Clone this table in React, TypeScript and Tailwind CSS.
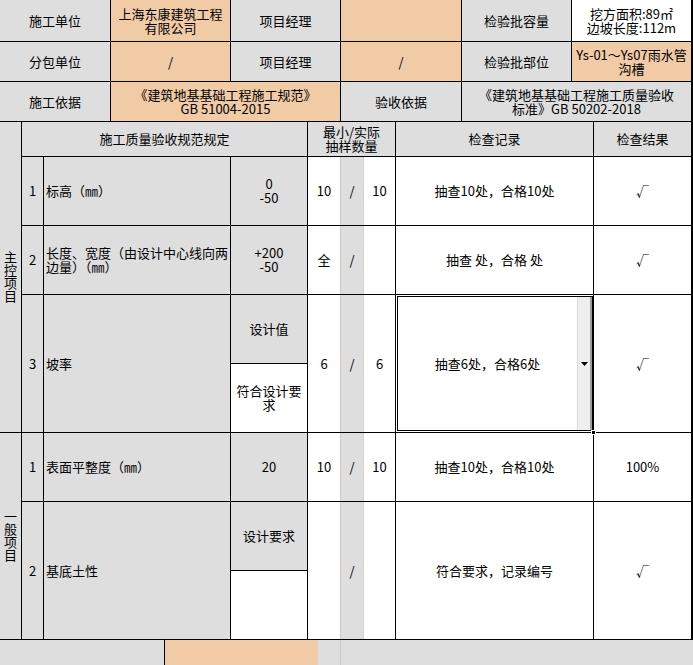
import type { ReactNode } from "react";

const gray = "bg-[#dedede]";
const orange = "bg-[#f1caa6]";

function Cell({ className = "", children }: { className?: string; children?: ReactNode }) {
  return (
    <div
      className={`flex items-center justify-center border-r border-b border-black text-center ${className}`}
    >
      {children}
    </div>
  );
}

function Sample({ a, b }: { a?: string; b?: string }) {
  return (
    <div className="flex h-full w-full">
      <div className="flex w-[32px] items-center justify-center">{a}</div>
      <div className="flex w-[24px] items-center justify-center border-l border-r border-l-[#cdc8c3] border-r-[#d4d0cc] bg-[#dedede]">
        /
      </div>
      <div className="flex flex-1 items-center justify-center">{b}</div>
    </div>
  );
}

function Vertical({ text }: { text: string }) {
  return <div className="leading-[13px] [writing-mode:vertical-rl]">{text}</div>;
}

export default function App() {
  return (
    <div className="h-[665px] w-[693px] overflow-hidden bg-white font-['Noto_Sans_CJK_SC',sans-serif] text-[13px] leading-[14px] text-black">
      {/* header block */}
      <div className="grid grid-cols-[111px_120px_110px_121px_110px_121px] grid-rows-[42px_40px_40px]">
        <Cell className={gray}>施工单位</Cell>
        <Cell className={orange}>
          上海东康建筑工程
          <br />
          有限公司
        </Cell>
        <Cell className={gray}>项目经理</Cell>
        <Cell className={orange} />
        <Cell className={gray}>检验批容量</Cell>
        <Cell className="border-r-2 bg-white">
          挖方面积:89㎡
          <br />
          边坡长度:112m
        </Cell>

        <Cell className={gray}>分包单位</Cell>
        <Cell className={orange}>/</Cell>
        <Cell className={gray}>项目经理</Cell>
        <Cell className={orange}>/</Cell>
        <Cell className={gray}>检验批部位</Cell>
        <Cell className={`border-r-2 whitespace-nowrap ${orange}`}>
          Ys-01～Ys07雨水管
          <br />
          沟槽
        </Cell>

        <Cell className={gray}>施工依据</Cell>
        <Cell className={`col-span-2 ${orange}`}>
          《建筑地基基础工程施工规范》
          <br />
          GB 51004-2015
        </Cell>
        <Cell className={gray}>验收依据</Cell>
        <Cell className={`col-span-2 border-r-2 ${gray}`}>
          《建筑地基基础工程施工质量验收
          <br />
          标准》GB 50202-2018
        </Cell>
      </div>

      {/* inspection items */}
      <div className="grid grid-cols-[22px_22px_187px_77px_88px_198px_99px] grid-rows-[35px_69px_69px_69px_69px_69px_69px_69px]">
        <Cell className={`col-start-1 row-start-1 row-end-6 ${gray}`}>
          <Vertical text="主控项目" />
        </Cell>
        <Cell className={`col-start-2 col-end-5 row-start-1 ${gray}`}>施工质量验收规范规定</Cell>
        <Cell className={`col-start-5 row-start-1 ${gray}`}>
          最小/实际
          <br />
          抽样数量
        </Cell>
        <Cell className={`col-start-6 row-start-1 ${gray}`}>检查记录</Cell>
        <Cell className={`col-start-7 row-start-1 border-r-2 ${gray}`}>检查结果</Cell>

        {/* 1 标高 */}
        <Cell className={`col-start-2 row-start-2 ${gray}`}>1</Cell>
        <Cell className={`col-start-3 row-start-2 justify-start pl-[2px] text-left ${gray}`}>标高（㎜）</Cell>
        <Cell className={`col-start-4 row-start-2 ${gray}`}>
          0
          <br />
          -50
        </Cell>
        <Cell className="col-start-5 row-start-2 bg-white">
          <Sample a="10" b="10" />
        </Cell>
        <Cell className="col-start-6 row-start-2 bg-white">抽查10处，合格10处</Cell>
        <Cell className="col-start-7 row-start-2 border-r-2 bg-white">√</Cell>

        {/* 2 长度宽度 */}
        <Cell className={`col-start-2 row-start-3 ${gray}`}>2</Cell>
        <Cell className={`col-start-3 row-start-3 justify-start pl-[2px] text-left ${gray}`}>
          <div>
            长度、宽度（由设计中心线向两
            <br />
            边量）（㎜）
          </div>
        </Cell>
        <Cell className={`col-start-4 row-start-3 ${gray}`}>
          +200
          <br />
          -50
        </Cell>
        <Cell className="col-start-5 row-start-3 bg-white">
          <Sample a="全" />
        </Cell>
        <Cell className="col-start-6 row-start-3 bg-white">抽查 处，合格 处</Cell>
        <Cell className="col-start-7 row-start-3 border-r-2 bg-white">√</Cell>

        {/* 3 坡率 */}
        <Cell className={`col-start-2 row-start-4 row-end-6 ${gray}`}>3</Cell>
        <Cell className={`col-start-3 row-start-4 row-end-6 justify-start pl-[2px] ${gray}`}>坡率</Cell>
        <Cell className={`col-start-4 row-start-4 ${gray}`}>设计值</Cell>
        <Cell className="col-start-4 row-start-5 bg-white">
          符合设计要
          <br />
          求
        </Cell>
        <Cell className="col-start-5 row-start-4 row-end-6 bg-white">
          <Sample a="6" b="6" />
        </Cell>
        <div className="relative z-10 col-start-6 row-start-4 row-end-6 border-r border-b border-black bg-white">
          <div className="absolute top-[1px] right-0 bottom-[1px] left-[1px] flex border border-black">
            <div className="flex flex-1 items-center justify-center">抽查6处，合格6处</div>
            <div className="flex w-[15px] items-center justify-center border-l border-r-2 border-l-[#d8d8d8] border-r-[#9c9c9c] bg-[#efefef]">
              <svg width="7" height="4" viewBox="0 0 7 4">
                <path d="M0 0h7L3.5 4z" fill="#000" />
              </svg>
            </div>
          </div>
          <div className="absolute right-[-3px] bottom-[-3px] h-[5px] w-[5px] border border-white bg-black" />
        </div>
        <Cell className="col-start-7 row-start-4 row-end-6 border-r-2 bg-white">√</Cell>

        {/* 一般项目 */}
        <Cell className={`col-start-1 row-start-6 row-end-9 ${gray}`}>
          <Vertical text="一般项目" />
        </Cell>
        <Cell className={`col-start-2 row-start-6 ${gray}`}>1</Cell>
        <Cell className={`col-start-3 row-start-6 justify-start pl-[2px] ${gray}`}>表面平整度（㎜）</Cell>
        <Cell className={`col-start-4 row-start-6 ${gray}`}>20</Cell>
        <Cell className="col-start-5 row-start-6 bg-white">
          <Sample a="10" b="10" />
        </Cell>
        <Cell className="col-start-6 row-start-6 bg-white">抽查10处，合格10处</Cell>
        <Cell className="col-start-7 row-start-6 border-r-2 bg-white">100%</Cell>

        <Cell className={`col-start-2 row-start-7 row-end-9 ${gray}`}>2</Cell>
        <Cell className={`col-start-3 row-start-7 row-end-9 justify-start pl-[2px] ${gray}`}>基底土性</Cell>
        <Cell className={`col-start-4 row-start-7 ${gray}`}>设计要求</Cell>
        <Cell className="col-start-4 row-start-8 bg-white" />
        <Cell className="col-start-5 row-start-7 row-end-9 bg-white">
          <Sample />
        </Cell>
        <Cell className="col-start-6 row-start-7 row-end-9 bg-white">符合要求，记录编号</Cell>
        <Cell className="col-start-7 row-start-7 row-end-9 border-r-2 bg-white">√</Cell>
      </div>

      {/* footer row, cut off by the window */}
      <div className="flex h-[26px]">
        <div className={`w-[165px] border-r border-black ${gray}`} />
        <div className={`w-[153px] ${orange}`} />
        <div className={`w-[22px] ${gray}`} />
        <div className={`flex-1 border-l border-l-[#cdc8c3] ${gray}`} />
      </div>
    </div>
  );
}
